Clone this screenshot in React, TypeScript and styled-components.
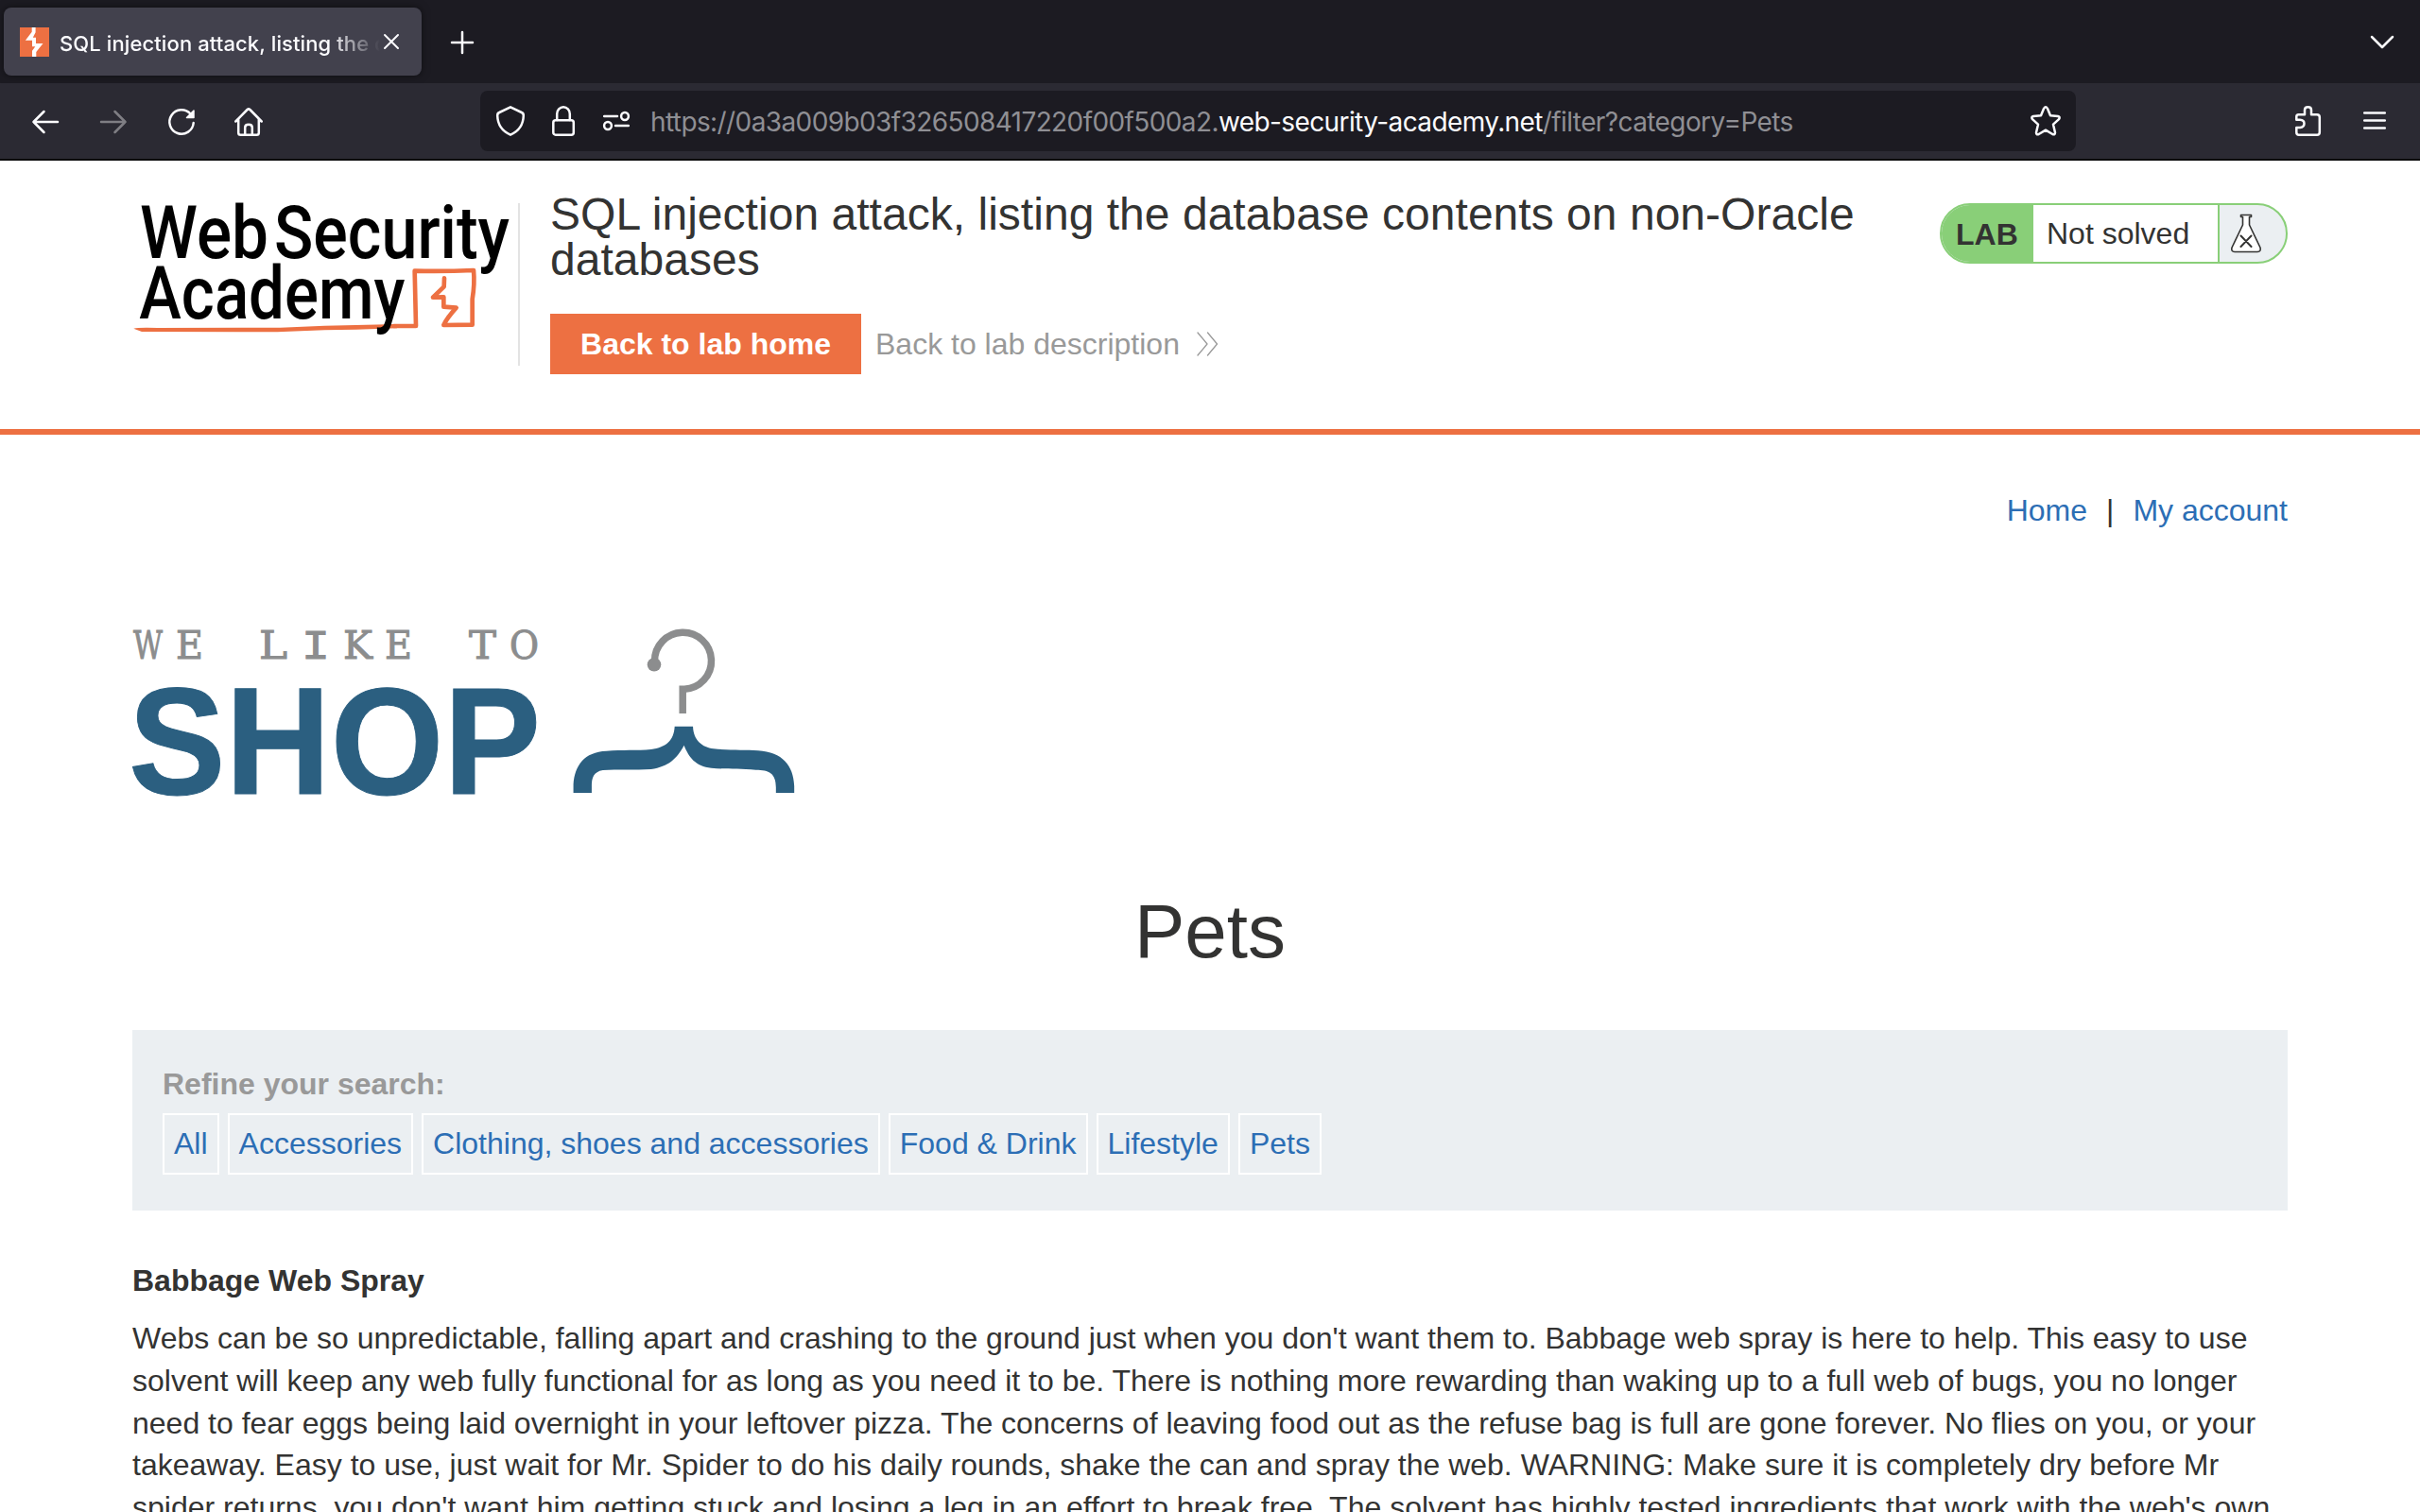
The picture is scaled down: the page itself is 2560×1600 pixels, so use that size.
import React from "react";
import styled, { createGlobalStyle } from "styled-components";

const GlobalStyle = createGlobalStyle`
  * { box-sizing: border-box; }
  html, body { margin: 0; padding: 0; background: #fff; }
  body { font-family: "Liberation Sans", Arial, sans-serif; color: #333332; overflow: hidden; }
`;

const Window = styled.div`
  width: 2560px;
  height: 1600px;
  overflow: hidden;
  display: flex;
  flex-direction: column;
  font-size: 32px;
`;

/* ---------- browser chrome ---------- */

const TabStrip = styled.div`
  flex: none;
  height: 88px;
  padding: 0 28px 0 4px;
  display: flex;
  align-items: center;
  background: #1c1b22;
  color: #fbfbfe;
`;

const Tab = styled.div`
  width: 442px;
  height: 72px;
  padding: 0 23px 0 17px;
  display: flex;
  align-items: center;
  border-radius: 8px;
  background: #42414d;
  box-shadow: 0 0 8px rgba(0, 0, 0, 0.5);
`;

const TabTitle = styled.div`
  width: 339px;
  margin: 4px 4px 0 11px;
  overflow: hidden;
  white-space: nowrap;
  font: 500 22px/32px Inter, sans-serif;
  letter-spacing: 0.1px;
  mask-image: linear-gradient(to right, #000 84%, transparent 100%);
`;

const NewTab = styled.div`
  margin: 2px 0 0 31px;
  flex: 1;
  display: flex;
`;

const Toolbar = styled.div`
  flex: none;
  height: 82px;
  padding: 8px 36px 8px 34px;
  display: flex;
  align-items: center;
  background: #2b2a33;
  border-bottom: 2px solid #0c0c0d;
`;

const NavButtons = styled.div`
  width: 474px;
  padding-top: 2px;
  display: flex;
  align-items: center;
  gap: 44px;
`;

const UrlBar = styled.div`
  width: 1688px;
  height: 64px;
  padding: 0 16px;
  display: flex;
  align-items: center;
  border-radius: 8px;
  background: #1c1b22;
`;

const UrlIcons = styled.div`
  width: 164px;
  display: flex;
  align-items: center;
  gap: 25px;
`;

const Url = styled.div`
  flex: 1;
  padding-top: 2px;
  white-space: nowrap;
  font: 400 28px/40px Inter, sans-serif;
  letter-spacing: -0.6px;
  color: #8f8f94;
`;

const Host = styled.span`
  color: #fbfbfe;
`;

const ToolbarEnd = styled.div`
  flex: 1;
  display: flex;
  align-items: center;
  justify-content: flex-end;
  gap: 44px;
`;

const Icon = styled.svg<{ $w: number; $h: number; $stroke?: number; $dim?: boolean }>`
  flex: none;
  display: block;
  width: ${(p) => p.$w}px;
  height: ${(p) => p.$h}px;
  overflow: visible;
  fill: none;
  stroke: ${(p) => (p.$dim ? "#7f7e84" : "#fbfbfe")};
  stroke-width: ${(p) => p.$stroke ?? 2.5};
  stroke-linecap: round;
  stroke-linejoin: round;
`;

/* ---------- lab header ---------- */

const LabHeader = styled.header`
  flex: none;
  height: 290px;
  padding: 33px 140px 0;
  display: flex;
  align-items: flex-start;
  border-bottom: 6px solid #ed7042;
`;

const AcademyLogo = styled.svg`
  flex: none;
  width: 408px;
  height: 172px;
  margin-top: 12px;
  overflow: visible;
  font-family: Roboto, sans-serif;
  font-weight: 500;
`;

const TitleColumn = styled.div`
  width: 1470px;
  padding-left: 32px;
`;

const LogoRule = styled.div`
  flex: none;
  width: 2px;
  height: 172px;
  margin-top: 12px;
  background: #e3e3e3;
`;

const LabTitle = styled.h2`
  margin: 0 0 33px;
  max-width: 1400px;
  font-size: 48px;
  line-height: 48px;
  font-weight: 400;
  letter-spacing: 0.03px;
`;

const Actions = styled.div`
  display: flex;
  align-items: center;
`;

const HomeButton = styled.a`
  height: 64px;
  width: 329px;
  line-height: 64px;
  text-align: center;
  background: #ed7042;
  color: #fff;
  font-weight: 700;
`;

const DescriptionLink = styled.a`
  margin-left: 15px;
  display: flex;
  align-items: center;
  gap: 18px;
  line-height: 64px;
  color: #999;
`;

const Status = styled.div`
  flex: none;
  width: 368px;
  height: 64px;
  margin-top: 12px;
  margin-left: auto;
  display: flex;
  overflow: hidden;
  border: 2px solid #89cf78;
  border-radius: 32px;
  background: #ebeff2;
`;

const StatusLabel = styled.div`
  width: 97px;
  padding-left: 15px;
  line-height: 62px;
  font-weight: 700;
  background: #89cf78;
`;

const StatusText = styled.div`
  width: 197px;
  padding-left: 14px;
  line-height: 60px;
  border-right: 2px solid #89cf78;
  background: #fff;
`;

const Flask = styled(Icon)`
  margin: 9px 0 0 12px;
`;

/* ---------- page body ---------- */

const Page = styled.main`
  flex: 1;
  min-height: 0;
  padding: 58px 140px 0;
  display: flex;
  flex-direction: column;
`;

const TopLinks = styled.nav`
  display: flex;
  justify-content: flex-end;
  line-height: 44px;
  gap: 20px;
`;

const Link = styled.a`
  color: #2c6eb5;
`;

const ShopLogo = styled.svg`
  flex: none;
  width: 720px;
  height: 180px;
  margin-top: 102px;
  overflow: visible;
`;

const Category = styled.h1`
  margin: 98px 0 0;
  text-align: center;
  font-size: 80px;
  line-height: 88px;
  font-weight: 400;
`;

const Filters = styled.section`
  flex: none;
  height: 191px;
  margin-top: 60px;
  padding: 35px 32px 0;
  background: #ebeff2;
`;

const FiltersLabel = styled.div`
  line-height: 44px;
  font-weight: 700;
  color: #999;
`;

const FilterRow = styled.div`
  margin-top: 9px;
  display: flex;
  gap: 9px;
`;

const Filter = styled.a`
  height: 65px;
  padding: 0 10px;
  line-height: 60px;
  border: 2px solid #fff;
  color: #2c6eb5;
`;

const ProductName = styled.h3`
  margin: 52px 0 0;
  font-size: 32px;
  line-height: 44px;
  font-weight: 700;
`;

const Description = styled.p`
  margin: 17px 0 0;
  line-height: 44.8px;
`;

const filters = ["All", "Accessories", "Clothing, shoes and accessories", "Food & Drink", "Lifestyle", "Pets"];

/* Slogan letters: glyph, left edge, width */
const slogan: [string, number, number][] = [
  ["W", 141, 31],
  ["E", 186, 29],
  [" ", 230, 20],
  ["L", 274, 30],
  ["I", 319, 30],
  ["K", 363, 31],
  ["E", 407, 29],
  [" ", 450, 20],
  ["T", 496, 29],
  ["O", 539, 31],
];

export default function App() {
  return (
    <Window>
      <GlobalStyle />
      <TabStrip>
        <Tab>
          <Icon $w={31} $h={31} viewBox="0 0 31 31">
            <rect width="31" height="31" fill="#ed7042" stroke="none" />
            <path d="M12.700 0H16.600V5.300L13.800 10.700H17V17H24.500L17.300 26V31H13V24.700L16.300 20.300H13V13.700H5.900L12.700 4.700Z" fill="#fff" stroke="none" />
          </Icon>
          <TabTitle>SQL injection attack, listing the database</TabTitle>
          <Icon $w={16} $h={16} $stroke={2} viewBox="0 0 16 16"><path d="M1 1L15 15M15 1L1 15" /></Icon>
        </Tab>
        <NewTab>
          <Icon $w={24} $h={24} viewBox="0 0 24 24"><path d="M12 1V23M1 12H23" /></Icon>
        </NewTab>
        <Icon $w={24} $h={13} viewBox="0 0 24 13"><path d="M1 1L12 12L23 1" /></Icon>
      </TabStrip>

      <Toolbar>
        <NavButtons>
          <Icon $w={28} $h={24} viewBox="0 0 28 24"><path d="M27 12H1.500M12.500 1L1.500 12L12.500 23" /></Icon>
          <Icon $w={28} $h={24} $dim viewBox="0 0 28 24"><path d="M1 12H26.500M15.500 1L26.500 12L15.500 23" /></Icon>
          <Icon $w={28} $h={28} viewBox="0 0 28 28">
            <path d="M26.700 15A12.700 12.700 0 1 1 23.500 5.500" />
            <path d="M27 2V9.500H19.500Z" fill="#fbfbfe" strokeWidth="1.500" />
          </Icon>
          <Icon $w={30} $h={30} viewBox="2 0 30 30">
            <path d="M1.300 14.500L13.600 2Q15 .8 16.400 2L28.700 14.500M4.200 12V26.500Q4.200 28.800 6.500 28.800H23.500Q25.800 28.800 25.800 26.500V12M11.200 28.500V21Q11.200 17.800 15 17.800T18.800 21V28.500" />
          </Icon>
        </NavButtons>
        <UrlBar>
          <UrlIcons>
            <Icon $w={32} $h={32} viewBox="0 0 32 32">
              <path d="M16 1.300L27.800 7Q30 8 29.800 10.500C29.500 19 25.500 26.500 16 30.700C6.500 26.500 2.500 19 2.200 10.500Q2 8 4.200 7Z" />
            </Icon>
            <Icon $w={32} $h={32} viewBox="1 0 32 32">
              <rect x="5.300" y="15.200" width="21.500" height="15.500" rx="2.500" />
              <path d="M9.200 15V8.500A6.800 7.200 0 0 1 22.800 8.500V15" />
            </Icon>
            <Icon $w={28} $h={20} viewBox="0 0 28 20">
              <circle cx="23" cy="5" r="3.900" />
              <circle cx="5" cy="15" r="3.900" />
              <path d="M1.200 5H15M13 15H26.800" />
            </Icon>
          </UrlIcons>
          <Url>
            https://0a3a009b03f326508417220f00f500a2.<Host>web-security-academy.net</Host>/filter?category=Pets
          </Url>
          <Icon $w={32} $h={32} viewBox="0 0 32 32">
            <path d="M14.200 2.600Q16 0 17.800 2.600L21 10.200L29 11Q31.800 11.800 30 14.200L24 19.700L26 28.300Q26 31 23.300 30L16 25.700L8.700 30Q6 31 6 28.300L8 19.700L2 14.200Q.2 11.800 3 11L11 10.200Z" />
          </Icon>
        </UrlBar>
        <ToolbarEnd>
          <Icon $w={28} $h={32} viewBox="0 0 28 32">
            <path d="M3.500 9.200H10V4.500Q10 1.300 13.500 1.300T17 4.500V9.200H23Q25.800 9.200 25.800 12V28Q25.800 30.800 23 30.800H4Q1.300 30.800 1.300 28V23H5Q9.500 22.500 9.500 18.700T5 14.700H1.300V11.500Q1.300 9.200 3.500 9.200Z" />
          </Icon>
          <Icon $w={24} $h={18} viewBox="0 0 24 18"><path d="M1.200 .5H22.800M1.200 8.500H22.800M1.200 16.500H22.800" /></Icon>
        </ToolbarEnd>
      </Toolbar>

      <LabHeader>
        <AcademyLogo viewBox="30 75 1224 516">
          <path d="M860 465L930 465L926 290Q1020 292 1113 288Q1117 330 1109 380L1109 461L1018 462Q1028 440 1058 407L1018 404L1018 373L984 374L1019 340L1020 313" fill="none" stroke="#ed7042" strokeWidth="14" strokeLinejoin="round" strokeLinecap="round" />
          <path d="M34 473Q50 469 110 471L500 470L640 464L870 459V472L740 476L640 478L490 484L60 483Z" fill="#ed7042" />
          <text x="54" y="248" fontSize="232" textLength="408" lengthAdjust="spacingAndGlyphs">Web</text>
          <text x="480" y="248" fontSize="232" textLength="747" lengthAdjust="spacingAndGlyphs">Security</text>
          <text x="52" y="442" fontSize="232" textLength="843" lengthAdjust="spacingAndGlyphs">Academy</text>
        </AcademyLogo>
        <LogoRule />
        <TitleColumn>
          <LabTitle>SQL injection attack, listing the database contents on non-Oracle databases</LabTitle>
          <Actions>
            <HomeButton>Back to lab home</HomeButton>
            <DescriptionLink>
              Back to lab description
              <Icon $w={22} $h={24} $stroke={1.3} viewBox="0 0 22 24">
                <path d="M1 0L11 12L1 24M11.500 0L21.500 12L11.500 24" stroke="#999" />
              </Icon>
            </DescriptionLink>
          </Actions>
        </TitleColumn>
        <Status>
          <StatusLabel>LAB</StatusLabel>
          <StatusText>Not solved</StatusText>
          <Flask $w={32} $h={42} viewBox="0 0 32 42">
            <path d="M10.500 1.500H21.500V3.500H19.500V12L31 36Q32 40.500 28 40.500H4Q0 40.500 1 36L12.500 12V3.500H10.500Z" fill="#fff" stroke="#333332" strokeWidth="1.600" />
            <path d="M10.500 23.500L21.500 35M21.500 23.500L10.500 35" stroke="#333332" strokeWidth="2" />
          </Flask>
        </Status>
      </LabHeader>

      <Page>
        <TopLinks>
          <Link>Home</Link>
          <span>|</span>
          <Link>My account</Link>
        </TopLinks>
        <ShopLogo viewBox="140 664 720 180">
          <text y="697" fontFamily="DejaVu Serif, serif" fontSize="41" fill="#8c8d8e" stroke="#8c8d8e" strokeWidth="1">
            {slogan.map(([glyph, x, width], i) => (
              <tspan
                key={i}
                x={x}
                textLength={width}
                lengthAdjust="spacingAndGlyphs"
                fontFamily={glyph === "I" ? "Liberation Mono, monospace" : undefined}
                fontSize={glyph === "I" ? 45 : undefined}
              >
                {glyph}
              </tspan>
            ))}
          </text>
          <text x="136" y="840" fontSize="162" fontWeight="700" fill="#2b5f80" stroke="#2b5f80" strokeWidth="1" textLength="436" lengthAdjust="spacingAndGlyphs">SHOP</text>
          <g fill="none" stroke="#8c8d8e" strokeWidth="7.500">
            <path d="M692.500 700A30 30 0 1 1 724 729.300H722.200V755" />
            <circle cx="692" cy="703.300" r="7.300" fill="#8c8d8e" stroke="none" />
          </g>
          <path transform="translate(120 640) scale(.47194 .33333)" fill="#2b5f80" d="M1258 386L1299 386C1300 430 1320 452 1345 457C1385 463 1415 459 1445 463C1500 468 1524 510 1526 575L1526 597L1485 597L1485 580C1485 535 1470 524 1440 524C1400 520 1370 522 1340 518C1305 512 1290 485 1279 446C1262 490 1245 512 1205 522C1170 525 1130 522 1097 525C1076 530 1072 550 1072 575L1072 597L1031 597L1031 570C1034 510 1055 467 1105 464C1140 460 1175 463 1205 459C1240 452 1256 430 1258 386Z" />
        </ShopLogo>
        <Category>Pets</Category>
        <Filters>
          <FiltersLabel>Refine your search:</FiltersLabel>
          <FilterRow>
            {filters.map((f) => (
              <Filter key={f}>{f}</Filter>
            ))}
          </FilterRow>
        </Filters>
        <ProductName>Babbage Web Spray</ProductName>
        <Description>
          Webs can be so unpredictable, falling apart and crashing to the ground just when you don't want them to.
          Babbage web spray is here to help. This easy to use solvent will keep any web fully functional for as long
          as you need it to be. There is nothing more rewarding than waking up to a full web of bugs, you no longer
          need to fear eggs being laid overnight in your leftover pizza. The concerns of leaving food out as the
          refuse bag is full are gone forever. No flies on you, or your takeaway. Easy to use, just wait for Mr.
          Spider to do his daily rounds, shake the can and spray the web. WARNING: Make sure it is completely dry
          before Mr spider returns, you don't want him getting stuck and losing a leg in an effort to break free. The
          solvent has highly tested ingredients that work with the web's own
        </Description>
      </Page>
    </Window>
  );
}
